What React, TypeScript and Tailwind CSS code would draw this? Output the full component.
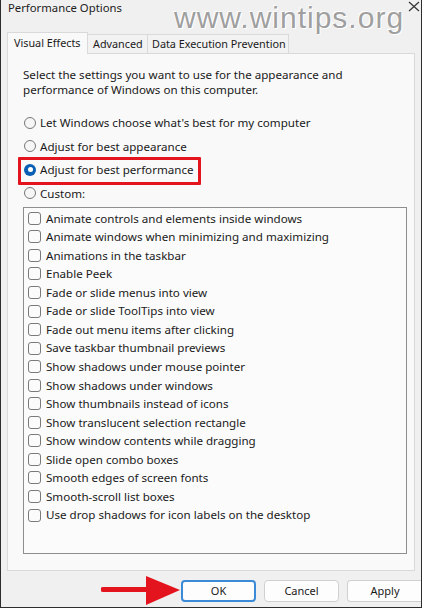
import React from 'react'

const effects = [
    'Animate controls and elements inside windows',
    'Animate windows when minimizing and maximizing',
    'Animations in the taskbar',
    'Enable Peek',
    'Fade or slide menus into view',
    'Fade or slide ToolTips into view',
    'Fade out menu items after clicking',
    'Save taskbar thumbnail previews',
    'Show shadows under mouse pointer',
    'Show shadows under windows',
    'Show thumbnails instead of icons',
    'Show translucent selection rectangle',
    'Show window contents while dragging',
    'Slide open combo boxes',
    'Smooth edges of screen fonts',
    'Smooth-scroll list boxes',
    'Use drop shadows for icon labels on the desktop',
]

const radios = [
    { label: "Let Windows choose what's best for my computer", checked: false },
    { label: 'Adjust for best appearance', checked: false },
    { label: 'Adjust for best performance', checked: true, marked: true },
    { label: 'Custom:', checked: false },
]

const Radio = ({ checked }: { checked: boolean }) => (
    checked ? (
        <span className="flex items-center justify-center w-[12px] h-[12px] rounded-full bg-[#0a5fb4]">
            <span className="w-[5px] h-[5px] rounded-full bg-white" />
        </span>
    ) : (
        <span className="w-[12px] h-[12px] rounded-full border border-[#777] bg-[#f6f6f6]" />
    )
)

const App = () => {
    return (
        <div className="relative w-[422px] h-[608px] bg-[#f0f0f0] border-x border-b border-[#2d2d2d] overflow-hidden text-[#1a1a1a]" style={{ fontFamily: '"Noto Sans", "Open Sans", sans-serif' }}>
            {/* title */}
            <div className="h-[31px] pl-[7px] text-[11.3px] leading-[15px] text-[#222]">Performance Options</div>

            {/* watermark */}
            <div className="absolute left-[173px] top-[1px] text-[30px] leading-[34px] tracking-[1px] text-[#9f9f9f] [text-shadow:1px_1px_0_#fff,-1px_-1px_0_#fff]" style={{ fontFamily: '"Liberation Sans", Arial, sans-serif' }}>
                www.wintips.org
            </div>
            <svg className="absolute left-[407px] top-[1px]" width="12" height="11" viewBox="0 0 12 11">
                <path d="M1 1 L11 10 M11 1 L1 10" stroke="#333" strokeWidth="1.2" />
            </svg>

            {/* tabs */}
            <div className="relative flex items-end pl-[6px] h-[22px] text-[10.8px] whitespace-nowrap">
                <div className="relative z-10 h-[22px] w-[81px] pl-[6px] pt-[2px] bg-[#f9f9f9] border-x border-t border-[#d9d9d9] -mb-px">Visual Effects</div>
                <div className="h-[19px] w-[60px] pl-[5px] pt-[1px] bg-[#f2f2f2] border-t border-r border-[#d9d9d9]">Advanced</div>
                <div className="h-[19px] w-[141px] pl-[4px] pt-[1px] bg-[#f2f2f2] border-t border-r border-[#d9d9d9]">Data Execution Prevention</div>
            </div>

            {/* panel */}
            <div className="mx-[6px] h-[518px] bg-[#f9f9f9] border border-[#d9d9d9] pt-[13px] px-[15px] text-[11.6px]">
                <p className="leading-[15px] whitespace-nowrap">
                    Select the settings you want to use for the appearance and<br />
                    performance of Windows on this computer.
                </p>

                <div className="mt-[14px] flex flex-col">
                    {radios.map(r => (
                        <div key={r.label} className="relative flex items-center h-[23.5px] pl-[1px] gap-[4px]">
                            <Radio checked={r.checked} />
                            <span>{r.label}</span>
                            {r.marked && (
                                <span className="absolute left-[-5px] top-[-1.5px] w-[183px] h-[28px] border-[3px] border-[#e3141d] rounded-[1px]" />
                            )}
                        </div>
                    ))}
                </div>

                <div className="mt-[2px] w-[384px] h-[347px] bg-[#fbfbfb] border border-[#8e8e8e] pt-[1px]">
                    {effects.map(e => (
                        <div key={e} className="flex items-center h-[18.55px] pl-[4px] gap-[5px]">
                            <span className="w-[13px] h-[13px] rounded-[3px] border border-[#7a7a7a] bg-[#fbfbfb]" />
                            <span>{e}</span>
                        </div>
                    ))}
                </div>
            </div>

            {/* buttons */}
            <div className="relative flex justify-end gap-[8px] pt-[9px] text-[11px]">
                <svg className="absolute left-[100px] top-[4px]" width="82" height="32" viewBox="0 0 82 32">
                    <path d="M2 14.5 L47 14.5" stroke="#e3141d" strokeWidth="5" strokeLinecap="round" />
                    <path d="M45 1 L79 15 L45 30 Z" fill="#e3141d" />
                </svg>
                <button className="w-[75px] h-[22px] rounded-[4px] bg-[#fdfdfd] border-2 border-[#3b8ad8]">OK</button>
                <button className="w-[75px] h-[22px] rounded-[4px] bg-[#fdfdfd] border border-[#d0d0d0]">Cancel</button>
                <button className="w-[75px] h-[22px] rounded-l-[4px] bg-[#fdfdfd] border-y border-l border-[#d0d0d0] mr-[-1px]">Apply</button>
            </div>
        </div>
    )
}

export default App
